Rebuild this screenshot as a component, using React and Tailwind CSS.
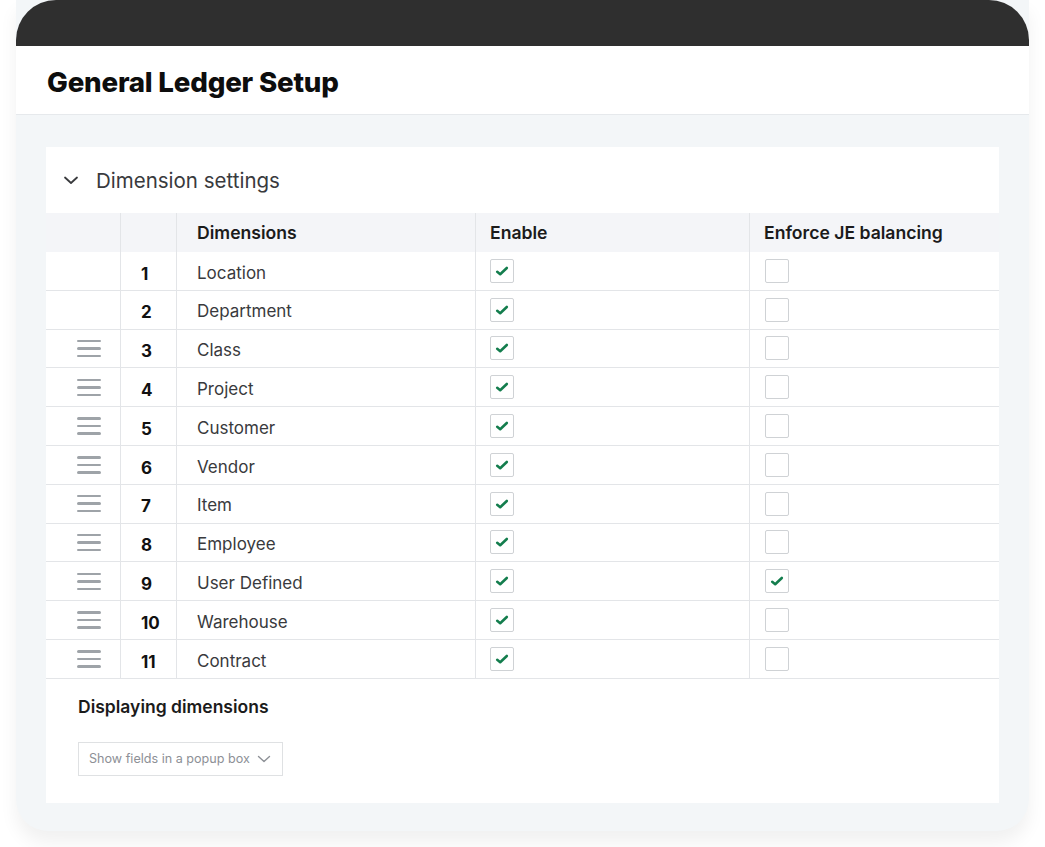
import React from 'react'

const rows = [
  { n: 1, name: 'Location', drag: false, enforce: false },
  { n: 2, name: 'Department', drag: false, enforce: false },
  { n: 3, name: 'Class', drag: true, enforce: false },
  { n: 4, name: 'Project', drag: true, enforce: false },
  { n: 5, name: 'Customer', drag: true, enforce: false },
  { n: 6, name: 'Vendor', drag: true, enforce: false },
  { n: 7, name: 'Item', drag: true, enforce: false },
  { n: 8, name: 'Employee', drag: true, enforce: false },
  { n: 9, name: 'User Defined', drag: true, enforce: true },
  { n: 10, name: 'Warehouse', drag: true, enforce: false },
  { n: 11, name: 'Contract', drag: true, enforce: false },
]

const Checkbox = ({ checked }) => (
  <div className="w-6 h-6 border border-[#cfd2d5] rounded-[2px] bg-white flex items-center justify-center">
    {checked && (
      <svg width="16" height="16" viewBox="0 0 16 16">
        <path d="M3.2 8.8 L6.2 11.2 L12.8 5" fill="none" stroke="#137d4d" strokeWidth="2.6" strokeLinecap="round" strokeLinejoin="round" />
      </svg>
    )}
  </div>
)

const DragHandle = () => (
  <div className="flex flex-col gap-[5px]">
    <div className="w-6 h-[2.5px] bg-[#9ea3a8] rounded-full" />
    <div className="w-6 h-[2.5px] bg-[#9ea3a8] rounded-full" />
    <div className="w-6 h-[2.5px] bg-[#9ea3a8] rounded-full" />
  </div>
)

const cols = 'grid grid-cols-[74px_56px_299px_274px_1fr]'

const App = () => {
  return (
    <div className="w-full min-h-[847px] bg-white pb-4" style={{ fontFamily: 'Inter, "Noto Sans", sans-serif' }}>
      <div className="mx-4 rounded-b-[32px] bg-[#f3f6f8] shadow-[0_12px_18px_rgba(0,0,0,0.06)] overflow-hidden">
        <div className="h-[46px] bg-[#2f2f2f] rounded-t-[40px]" />
        <div className="h-[69px] bg-white border-b border-[#e6e9ec] flex items-center px-[31px]">
          <h1 className="text-[27.7px] font-extrabold text-[#0d0d0d] tracking-[-0.2px] mt-[6px]">General Ledger Setup</h1>
        </div>

        <div className="px-[30px] pt-[32px] pb-[28px]">
          <div className="bg-white">
            <div className="h-[66px] flex items-center pl-[16px]">
              <svg width="18" height="18" viewBox="0 0 18 18" className="mr-[16px]">
                <path d="M3 6.5 L9 12 L15 6.5" fill="none" stroke="#393a3d" strokeWidth="1.8" strokeLinecap="round" strokeLinejoin="round" />
              </svg>
              <span className="text-[20.5px] text-[#393a3d] mt-[2px]">Dimension settings</span>
            </div>

            <div className={`${cols} h-[39px] bg-[#f4f5f8] text-[17.6px] font-semibold text-[#1b1b1b]`}>
              <div />
              <div className="border-l border-[#e3e5e8]" />
              <div className="border-l border-[#e3e5e8] flex items-center pl-[20px] pt-[1px]">Dimensions</div>
              <div className="border-l border-[#e3e5e8] flex items-center pl-[14px] pt-[1px]">Enable</div>
              <div className="border-l border-[#e3e5e8] flex items-center pl-[14px] pt-[1px]">Enforce JE balancing</div>
            </div>

            {rows.map((r) => (
              <div key={r.n} className={`${cols} h-[38.8px] border-b border-[#e3e5e8] text-[17px] text-[#393a3d]`}>
                <div className="flex items-center pl-[31px]">{r.drag && <DragHandle />}</div>
                <div className="border-l border-[#e3e5e8] flex items-center pl-[20px] pt-[7px] font-bold text-[#111]">{r.n}</div>
                <div className="border-l border-[#e3e5e8] flex items-center pl-[20px] pt-[5px]">{r.name}</div>
                <div className="border-l border-[#e3e5e8] flex items-center pl-[14px]">
                  <Checkbox checked />
                </div>
                <div className="border-l border-[#e3e5e8] flex items-center pl-[15px]">
                  <Checkbox checked={r.enforce} />
                </div>
              </div>
            ))}

            <div className="px-[32px] pt-[15px] pb-[27px]">
              <div className="text-[17.5px] font-semibold text-[#1b1b1b]">Displaying dimensions</div>
              <div className="mt-[22px] inline-flex items-center h-[34px] w-[205px] border border-[#dfe1e3] pl-[10px] pr-[10px] text-[12.6px] text-[#8d9096]">
                <span>Show fields in a popup box</span>
                <svg width="16" height="16" viewBox="0 0 16 16" className="ml-auto">
                  <path d="M2.5 5.5 L8 10.5 L13.5 5.5" fill="none" stroke="#8d9096" strokeWidth="1.4" strokeLinecap="round" strokeLinejoin="round" />
                </svg>
              </div>
            </div>
          </div>
        </div>
      </div>
    </div>
  )
}

export default App
